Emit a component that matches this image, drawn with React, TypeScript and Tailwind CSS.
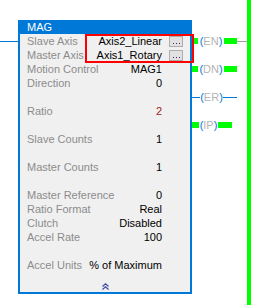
import React from "react";

type Row = {
  label?: string;
  value?: string;
  valueClass?: string;
  browse?: boolean;
};

const rows: Row[] = [
  { label: "Slave Axis", value: "Axis2_Linear", browse: true },
  { label: "Master Axis", value: "Axis1_Rotary", browse: true },
  { label: "Motion Control", value: "MAG1" },
  { label: "Direction", value: "0" },
  {},
  { label: "Ratio", value: "2", valueClass: "text-[#a01c1c]" },
  {},
  { label: "Slave Counts", value: "1" },
  {},
  { label: "Master Counts", value: "1" },
  {},
  { label: "Master Reference", value: "0" },
  { label: "Ratio Format", value: "Real" },
  { label: "Clutch", value: "Disabled" },
  { label: "Accel Rate", value: "100" },
  {},
  { label: "Accel Units", value: "% of Maximum" },
];

function Coil({ text, width }: { text: string; width: string }) {
  return (
    <div className={`${width} flex items-center justify-center leading-[14px]`}>
      <span className="text-[#0078d7]">(</span>
      <span className="text-[#b4b4b4]">{text}</span>
      <span className="text-[#0078d7]">)</span>
    </div>
  );
}

export default function App() {
  return (
    <div className="relative w-[262px] h-[305px] bg-white flex font-['Liberation_Sans',Arial,sans-serif] text-[11px] overflow-hidden">
      {/* rung wire into the block */}
      <div className="w-[18px] pt-[41px]">
        <div className="h-px bg-[#0078d7]" />
      </div>

      {/* instruction block */}
      <div className="mt-[20px] w-[174px] h-[274px] border-2 border-t-0 border-[#0078d7] bg-[#f0f0f0] flex flex-col">
        <div className="h-[14px] bg-[#0078d7] text-white pl-[7px] leading-[14px]">MAG</div>
        {rows.map((r, i) => (
          <div key={i} className="h-[14px] flex items-center leading-[14px]">
            <span className="flex-1 pl-[7px] text-[#8c8c8c] whitespace-nowrap">{r.label}</span>
            <span className={`whitespace-nowrap ${r.valueClass ?? "text-black"}`}>{r.value}</span>
            <div className="w-[28px] pl-[7px] flex items-center">
              {r.browse && (
                <div className="w-[14px] h-[11px] bg-[#e1e1e1] border border-[#adadad] flex items-end justify-center gap-[2px] pb-[2px]">
                  <span className="w-px h-px bg-[#5a1a6a]" />
                  <span className="w-px h-px bg-[#5a1a6a]" />
                  <span className="w-px h-px bg-[#5a1a6a]" />
                </div>
              )}
            </div>
          </div>
        ))}
        <div className="flex-1 flex justify-center pt-[11px]">
          <svg width="7" height="7" viewBox="0 0 7 7" fill="none" stroke="#3b4aa0" strokeWidth="1.2">
            <path d="M0.5 3.5 L3.5 0.8 L6.5 3.5" />
            <path d="M0.5 6.5 L3.5 3.8 L6.5 6.5" />
          </svg>
        </div>
      </div>

      {/* outputs */}
      <div className="w-[55px] mt-[34px] flex flex-col gap-[14px]">
        <div className="h-[14px] flex items-center">
          <div className="w-[6px] h-[6px] bg-[#00ff00]" />
          <Coil text="EN" width="w-[26px]" />
          <div className="w-[13px] h-[6px] bg-[#00ff00]" />
          <div className="w-[10px] h-px bg-[#a0a0a0]" />
        </div>
        <div className="h-[14px] flex items-center">
          <div className="w-[6px] h-[6px] bg-[#00ff00]" />
          <Coil text="DN" width="w-[26px]" />
          <div className="w-[13px] h-[6px] bg-[#00ff00]" />
        </div>
        <div className="h-[14px] flex items-center">
          <div className="w-[8px] h-px bg-[#0078d7]" />
          <Coil text="ER" width="w-[23px]" />
          <div className="w-[14px] h-px bg-[#0078d7]" />
        </div>
        <div className="h-[14px] flex items-center">
          <div className="w-[7px] h-[6px] bg-[#00ff00]" />
          <Coil text="IP" width="w-[19px]" />
          <div className="w-[14px] h-[6px] bg-[#00ff00]" />
        </div>
      </div>

      {/* power rail */}
      <div className="w-[4px] h-full bg-[#00ff00]" />

      {/* highlight around axis fields */}
      <div className="absolute left-[85px] top-[34px] w-[109px] h-[29px] border-2 border-[#ff0000]" />
    </div>
  );
}
